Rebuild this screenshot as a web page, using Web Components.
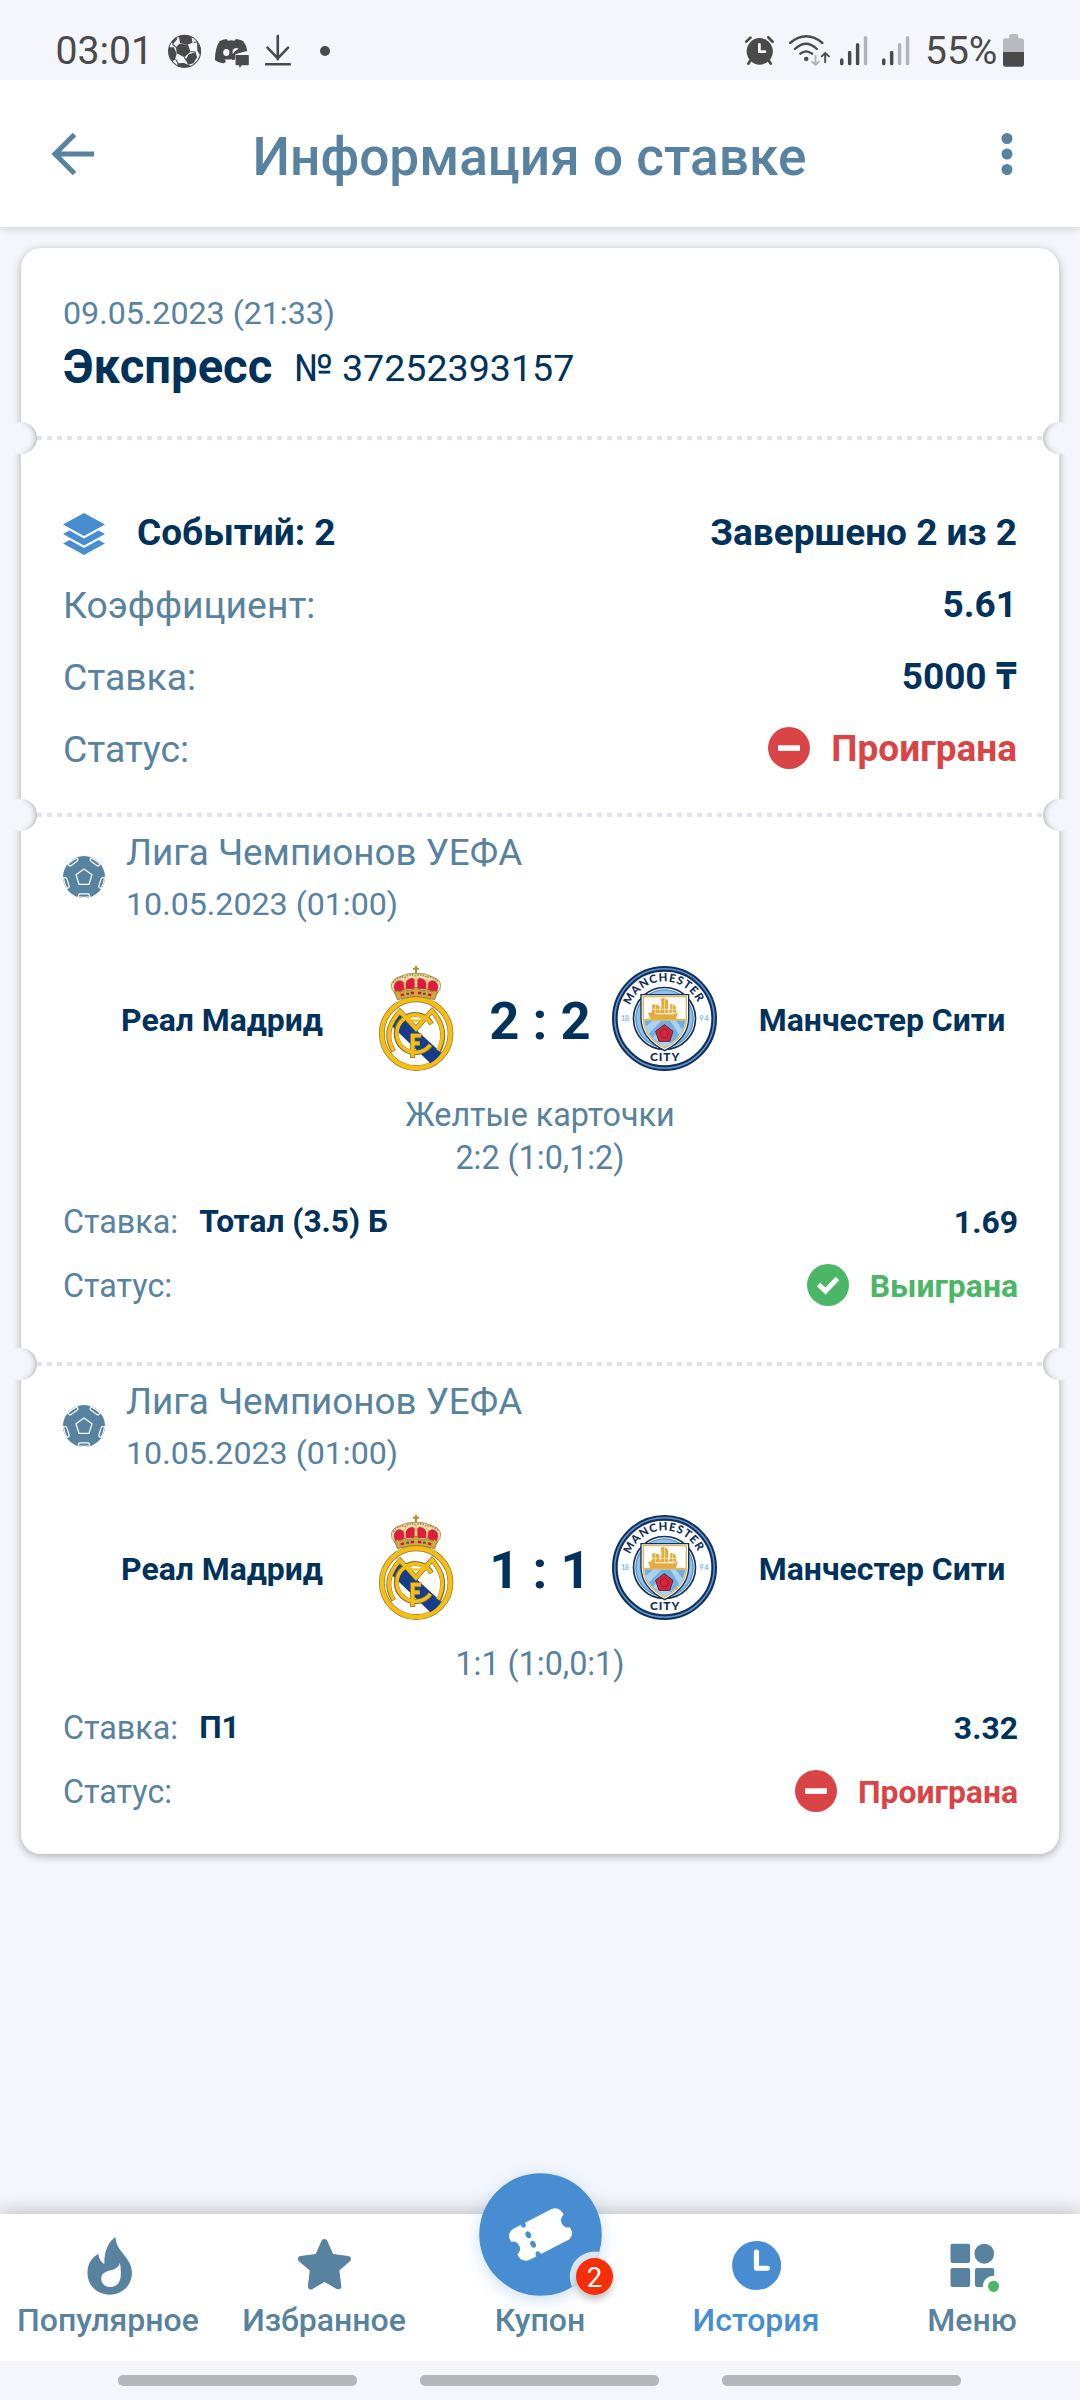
<!DOCTYPE html>
<html lang="ru">
<head>
<meta charset="utf-8">
<title>Информация о ставке</title>
<style>
  html, body { margin: 0; }
  body { width: 1080px; height: 2400px; overflow: hidden; background: #f4f6fb; font-family: Roboto, "Noto Sans", sans-serif;
    --slate: #5782a0; --navy: #00325b; --blue: #488dd2; --red: #d94546; --green: #4ab666; --bg: #f4f6fb; }
</style>
</head>
<body>
<bet-screen></bet-screen>

<script>
const ICONS = {
  /* status bar */
  ball: [33, 36, '487.8 102 95.8 108', `
    <ellipse cx="536" cy="154" rx="46.5" ry="48" fill="#f4f6fb" stroke="#4a4a4a" stroke-width="3"/>
    <g fill="#4a4a4a"><path d="M521 131L546 134L553 155L535 172L513 160L511 142Z"/>
    <path d="M519 109Q537 101 556 110L559 128L545 134L523 130Z"/>
    <path d="M490 142L505 142L513 161L508 179L500 184Q487 165 490 142Z"/>
    <path d="M548 163L568 157L572 172L562 190L546 194L539 179Z"/>
    <path d="M572 124L583 146L581 165L573 152Z"/>
    <path d="M516 190L534 189L554 197Q536 208 515 198Z"/>
    <path d="M497 126L511 112L515 117L503 132Z"/></g>
    <g stroke="#4a4a4a" stroke-width="3"><path d="M512 142L500 132M553 155L569 156M535 172L541 181M510 178L518 192M562 127L575 126"/></g>`],
  discord: [34, 36, '624.3 102 98.7 108', `
    <path fill="#4a4a4a" fill-rule="evenodd" d="M638 123Q648 118 658 117L662 122Q671 120 681 122L685 117Q697 118 706 123Q716 136 718 153L684 162L682 179L673 180L674 177Q664 180 652 178L656 184L651 190Q634 189 624 180Q624 145 638 123ZM657 147A9 10.500 0 1 0 657.100 168A9 10.500 0 0 0 657.100 147ZM676 149Q683 141 693 146Q683 151 675 162Z"/>
    <path fill="#4a4a4a" d="M687 165H720Q722.500 165 722.500 168V193Q722.500 196 720 196H702L696 204L694 196H687Q684 196 684 193V168Q684 165 687 165Z"/>`],
  download: [28, 36, '768 102 81.300 108', `
    <g fill="none" stroke="#4a4a4a" stroke-width="7.500" stroke-linecap="round"><path d="M808 108V178M778 143L808 175L838 143M774 193H843"/></g>`],
  alarm: [31, 36, '595.300 102 90 108', `
    <ellipse cx="641" cy="154" rx="38" ry="40" fill="#4a4a4a"/>
    <path d="M640 133V155H656" fill="none" stroke="#f4f6fb" stroke-width="8" stroke-linecap="round"/>
    <g fill="none" stroke="#4a4a4a" stroke-width="8" stroke-linecap="round"><path d="M602 125L614 113M666 112L678 125M613 183L608 191M668 183L673 191"/></g>`],
  wifi: [43, 36, '722 102 124.900 108', `
    <g fill="none" stroke="#4a4a4a" stroke-width="7" stroke-linecap="round"><path d="M728 129Q775 89 822 129M742 147Q774 115 806 147M758 161Q774 147 792 161"/></g>
    <ellipse cx="775" cy="177" rx="6.500" ry="6.500" fill="#4a4a4a"/>
    <g fill="none" stroke="#b2b4b8" stroke-width="5.500" stroke-linecap="round"><path d="M802 167V194M792 185L802 195L812 185"/></g>
    <g fill="none" stroke="#4a4a4a" stroke-width="5.500" stroke-linecap="round"><path d="M830 187V159M820 169L830 159L841 169"/></g>`],
  signal3: [30, 36, '869 102 87.100 108', `
    <g stroke="#4a4a4a" stroke-width="10" stroke-linecap="round"><path d="M877 180V191M900 157V191M923 134V191"/></g>
    <path stroke="#b2b4b8" stroke-width="10" stroke-linecap="round" d="M946 113V191"/>`],
  signal2: [30, 36, '991 102 87.100 108', `
    <g stroke="#4a4a4a" stroke-width="10" stroke-linecap="round"><path d="M999 180V191M1022 157V191"/></g>
    <path stroke="#b2b4b8" stroke-width="10" stroke-linecap="round" d="M1045 134V191M1068 113V191"/>`],
  battery: [21, 36, '1344 102 61 108', `
    <path fill="#b9babf" d="M1362 115V107Q1362 102 1367 102H1383Q1388 102 1388 107V115H1397Q1405 115 1405 123V158H1344V123Q1344 115 1352 115Z"/>
    <path fill="#4a4a4a" d="M1344 156H1405V192Q1405 200.500 1397 200.500H1352Q1344 200.500 1344 192Z"/>`],
  /* header */
  back: [42, 42, '0 0 42 42', `<path d="M22.500 1.500L3 21L22.500 40.500M3 21H42" fill="none" stroke="var(--slate)" stroke-width="5"/>`],
  more: [12, 44, '0 0 12 44', `<g fill="var(--slate)"><circle cx="6" cy="6.500" r="5.500"/><circle cx="6" cy="22" r="5.500"/><circle cx="6" cy="37.500" r="5.500"/></g>`],
  /* ticket */
  layers: [42, 42, '0 0 42 42', `<g fill="var(--blue)"><path d="M21 0L42 11.500L21 23L0 11.500Z"/><path d="M0 21L6.500 17.500L21 25.500L35.500 17.500L42 21L21 32.500Z"/><path d="M0 30.500L6.500 27L21 35L35.500 27L42 30.500L21 42Z"/></g>`],
  lost: [42, 42, '0 0 42 42', `<circle cx="21" cy="21" r="21" fill="var(--red)"/><rect x="10" y="18.300" width="22" height="5.600" fill="#fff"/>`],
  won: [42, 42, '0 0 42 42', `<circle cx="21" cy="21" r="21" fill="var(--green)"/><path d="M11.500 20.500L18.500 27L30.500 14.500" fill="none" stroke="#fff" stroke-width="5"/>`],
  football: [42, 42, '-21 -21 42 42', `<defs><clipPath id="c"><circle r="21"/></clipPath></defs><circle r="21" fill="var(--slate)"/>
    <g fill="none" stroke="#fff" stroke-width="1.200" stroke-linejoin="round" clip-path="url(#c)">
    <path d="M0 -8L8 -2.300L5 7.300H-5L-8 -2.300Z"/>
    ${[0, 72, 144, 216, 288].map(a => `<path transform="rotate(${a})" d="M-6 21L-5.200 17.600Q-4.900 16.900 -4 16.900H4Q4.900 16.900 5.200 17.600L6 21M-5.600 19.900Q0 20.800 5.600 19.900" />`).join('')}</g>`],
  /* bottom bar */
  fire: [60, 60, '226.500 258 174.200 180', `<path fill="var(--slate)" fill-rule="evenodd" d="M335 261C315 275 302 303 303 342C293 335 286 326 286 311C267 322 254 341 254 368C254 408 284 434 319 434C355 434 383 406 383 368C383 340 366 324 352 304C342 290 336 279 335 261ZM348 338C346 350 336 357 322 361C304 365 294 372 294 386C294 401 306 411 320 411C342 411 351 395 351 370Q351 350 348 338Z"/>`],
  star: [60, 60, '853.700 258 174.200 180', `<path fill="var(--slate)" stroke="var(--slate)" stroke-width="18" stroke-linejoin="round" d="M942 276L961 320L1010 327L976 358L982 409L942 385L903 409L909 358L874 327L923 320Z"/>`],
  clock: [60, 60, '540.100 258 174.200 180', `<ellipse cx="629" cy="346.500" rx="71.200" ry="73.500" fill="var(--blue)"/><path d="M628.500 306V355H660" fill="none" stroke="#fff" stroke-width="15" stroke-linecap="round" stroke-linejoin="round"/>`],
  menu: [60, 60, '1167.300 258 174.200 180', `<g fill="var(--slate)"><rect x="1192" y="281" width="57" height="58" rx="6"/><ellipse cx="1290" cy="311" rx="28.500" ry="30"/><rect x="1192" y="354" width="57" height="57" rx="6"/><rect x="1263" y="354" width="56" height="57" rx="6"/></g>
    <ellipse cx="1317" cy="409" rx="31" ry="32" fill="#fff"/><ellipse cx="1317" cy="409" rx="16" ry="17" fill="var(--green)"/>`],
  coupon: [123, 123, '-61.500 -61.500 123 123', `<defs><clipPath id="k"><circle r="61.300"/></clipPath></defs>
    <circle r="61.300" fill="var(--blue)"/><circle cx="54.300" cy="42" r="25" fill="#d9e6f5" clip-path="url(#k)"/>
    <g transform="rotate(-27)"><path fill="#fff" d="M-21 -17.500H21A8 8 0 0 1 29.500 -9V-7A7.200 7.200 0 0 0 29.500 7V9A8 8 0 0 1 21 17.500H-21A8 8 0 0 1 -29.500 9V7A7.200 7.200 0 0 0 -29.500 -7V-9A8 8 0 0 1 -21 -17.500Z"/>
    <g fill="var(--blue)"><ellipse cx="-11" cy="-17.500" rx="2.600" ry="4"/><ellipse cx="-11" cy="-5.300" rx="2.600" ry="3.600"/><ellipse cx="-11" cy="5.300" rx="2.600" ry="3.600"/><ellipse cx="-11" cy="17.500" rx="2.600" ry="4"/></g></g>`],
  /* crests */
  real: [105, 105, '9 48 315 315', `
    <path d="M168 48V72M159 56H177" stroke="#b8902a" stroke-width="6"/>
    <path d="M112 141L96 118Q88 90 116 82Q140 68 168 70Q196 68 220 82Q248 90 240 118L224 141Q168 126 112 141Z" fill="#f1dfae" stroke="#a38640" stroke-width="2.500"/>
    <path d="M104 124Q96 96 118 91Q136 92 135 116L112 130ZM232 124Q240 96 218 91Q200 92 201 116L224 130ZM138 118Q131 86 158 84L164 88V116ZM198 118Q205 86 178 84L172 88V116Z" fill="#dc1e3c"/>
    <path d="M100 98Q116 76 136 82Q150 70 166 77Q186 70 200 82Q220 76 236 98" fill="none" stroke="#9c7d36" stroke-width="5" stroke-dasharray="4 4"/>
    <path d="M168 76V114M137 86Q130 100 136 118M199 86Q206 100 200 118" fill="none" stroke="#e9c765" stroke-width="4"/>
    <path d="M104 126Q112 118 122 126L135 118Q140 124 150 122L168 112L186 122Q196 124 201 118L214 126Q224 118 232 126L224 149Q168 131 112 149Z" fill="#d3a73f" stroke="#8f7130" stroke-width="2.500"/>
    <path d="M122 136L132 133M152 129H162M174 129H184M204 133L214 136" stroke="#c01f33" stroke-width="7"/>
    <path d="M139 131H147M189 131H197" stroke="#345d5c" stroke-width="6"/>
    <circle cx="168.500" cy="251" r="103" fill="#fff" stroke="#8a7536" stroke-width="17.500"/>
    <circle cx="168.500" cy="251" r="103" fill="none" stroke="#f6bd12" stroke-width="13.500"/>
    <path d="M93 226Q99 206 114 190L244 308Q231 328 211 340Z" fill="#163c8c"/>
    <g fill="none" stroke="#806e3c" stroke-width="15"><path d="M101 304Q64 244 120 184L168 236L216 182Q268 240 236 303"/><path d="M215 222A57 57 0 1 0 212 284"/><path d="M158 324V257H184M158 280H180"/></g>
    <g fill="none" stroke="#f6bd12" stroke-width="11"><path d="M101 302Q65 244 120 184L168 236L216 182Q267 240 234 301"/><path d="M214 221A56 56 0 1 0 211 285"/><path d="M158 322V257H183M158 280H179"/><path d="M136 202L157 212H180L202 202" stroke-width="7"/></g>`],
  city: [105, 105, '756 48 315 315', `
    <circle cx="913.500" cy="205.500" r="149" fill="#fff" stroke="#132f5b" stroke-width="17"/>
    <circle cx="913.500" cy="205.500" r="149" fill="none" stroke="#5a97d2" stroke-width="4.500"/>
    <circle cx="913.500" cy="205.500" r="93" fill="#fff" stroke="#132f5b" stroke-width="5"/>
    <circle cx="913.500" cy="205.500" r="86" fill="#8fc2ea" stroke="#5c93c4" stroke-width="4"/>
    <path d="M843 134H986V205Q985 267 914 302Q844 267 843 205Z" fill="#fff" stroke="#132f5b" stroke-width="4"/>
    <path d="M850 140H979V205Q978 262 914 294Q851 262 850 205Z" fill="#fff" stroke="#e2b54d" stroke-width="4"/>
    <path d="M853 211H976Q971 262 914 291Q857 262 853 211Z" fill="#72afe0"/>
    <path d="M857 230L880 211H905L866 252ZM930 211L960 259L970 243L947 211ZM914 291L878 263L891 250L935 281Z" fill="#add2ef"/>
    <path d="M852 209H977" stroke="#e2b54d" stroke-width="5"/>
    <g fill="#e5ab3e"><path d="M864 188H882L888 193H942L954 186L948 207H871Z"/><path d="M875 164Q888 160 899 168V190H872Q880 178 875 164ZM902 146Q914 140 925 153L924 190H899Q908 166 902 146ZM930 162Q942 160 948 170V188H925Q934 175 930 162Z"/></g>
    <path d="M886 154V192M914 141V192M938 154V190M868 178H950" stroke="#fff1cd" stroke-width="2"/>
    <g fill="#d7263c" stroke="#5e2038" stroke-width="3"><path d="M913 224L939 244L929 274H897L887 244Z"/><path d="M913 236L926 247L921 263H905L900 247Z" stroke-width="2"/></g>
    <defs><path id="a" d="M810.200 166.500A110 110 0 0 1 1016.800 166.500"/></defs>
    <g font-family="Lato, 'Open Sans', sans-serif" font-weight="900" fill="#132f5b">
    <text font-size="34" textLength="262" lengthAdjust="spacing"><textPath href="#a" textLength="258" startOffset="0">MANCHESTER</textPath></text>
    <text x="870" y="334" font-size="36" textLength="88">CITY</text></g>
    <g font-family="Lato, 'Open Sans', sans-serif" font-weight="900" fill="#8fbfe6" font-size="22"><text x="783" y="213" textLength="24">18</text><text x="1018" y="213" textLength="28">94</text></g>`]
};

const define = (name, css, html) => customElements.define(name, class extends HTMLElement {
  connectedCallback() {
    const root = this.attachShadow({ mode: 'open' });
    const tpl = document.createElement('template');
    tpl.innerHTML = `<style>:host{display:block;box-sizing:border-box}*{box-sizing:border-box}${css}</style>` + (typeof html === 'function' ? html(this) : html);
    root.append(tpl.content.cloneNode(true));
  }
});

define('app-icon', ':host{display:block;flex:none}svg{display:block;overflow:visible}', el => {
  const [w, h, vb, body] = ICONS[el.getAttribute('name')];
  return `<svg width="${w}" height="${h}" viewBox="${vb}" preserveAspectRatio="none" aria-hidden="true">${body}</svg>`;
});

define('status-bar', `
  :host{display:flex;justify-content:space-between;height:80px;padding:0 56px 0 55.500px;color:#4a4a4a}
  div{display:flex;align-items:flex-start}
  app-icon{margin-top:34px}
  span{line-height:46px;margin-top:27.500px;font-size:39.200px;white-space:nowrap}
  .dot{width:10px;height:10px;border-radius:50%;background:#4a4a4a;margin:46px 0 0 28px}`,
  `<div><span style="width:97.5px">03:01</span><app-icon name="ball" style="margin-left:15px"></app-icon><app-icon name="discord" style="margin-left:14px"></app-icon><app-icon name="download" style="margin-left:15px"></app-icon><i class="dot"></i></div>
   <div><app-icon name="alarm"></app-icon><app-icon name="wifi" style="margin-left:13px"></app-icon><app-icon name="signal3" style="margin-left:8px"></app-icon><app-icon name="signal2" style="margin-left:12px"></app-icon><span style="margin-left:14px;width:78px;font-size:39px">55%</span><app-icon name="battery"></app-icon></div>`);

define('app-header', `
  :host{display:flex;align-items:center;height:147px;padding:0 67px 0 52px;background:#fff;box-shadow:0 1px 9px rgba(40,40,60,.22);clip-path:inset(0 0 -24px 0)}
  h1{flex:1;margin:0;padding:7px 36px 0 0;text-align:center;font-size:53.200px;font-weight:500;color:var(--slate);line-height:64px}`,
  `<app-icon name="back"></app-icon><h1><slot></slot></h1><app-icon name="more"></app-icon>`);

define('ticket-section', `
  :host{position:relative}
  :host([cut])::before{content:"";position:absolute;left:16px;right:16px;top:-2px;height:4px;background:repeating-linear-gradient(90deg,#dfe3ee 0 5px,transparent 5px 10px)}
  i{display:none}
  :host([cut]) i{display:block;position:absolute;top:-16px;width:32px;height:32px;border-radius:50%}
  .l{left:-16px;background:linear-gradient(90deg,var(--bg) 45%,transparent 90%),radial-gradient(closest-side,var(--bg) 55%,#e4e5e9 80%,#c4c5c9 100%)}
  .r{right:-16px;background:linear-gradient(270deg,var(--bg) 45%,transparent 90%),radial-gradient(closest-side,var(--bg) 55%,#e4e5e9 80%,#c4c5c9 100%)}`,
  `<slot></slot><i class="l"></i><i class="r"></i>`);

define('ticket-head', `
  :host{height:190px;padding:44.500px 42px 0}
  .d{font-size:32.200px;line-height:40px;color:var(--slate)}
  .t{display:flex;align-items:flex-start;margin-top:6px;line-height:56px;color:var(--navy);font-size:37.600px}
  .t span{margin-top:1.500px}
  b{font-size:47.200px;width:231px}`,
  el => `<div class="d">${el.getAttribute('date')}</div><div class="t"><b>${el.getAttribute('kind')}</b><span>${el.getAttribute('number')}</span></div>`);

define('info-row', `
  :host{display:flex;align-items:center;justify-content:space-between;height:72px;padding:0 42px;font-size:37.300px;line-height:44px;color:var(--slate);white-space:nowrap}
  :host([small]){height:64px;font-size:32.300px}
  .k,.v{display:flex;align-items:center}
  .v{font-weight:700;color:var(--navy);font-size:37px}
  :host([small]) .v{font-size:31.900px;margin-right:-1px}
  .v span{display:block;height:44px}
  :host([result=lost]) .v{color:var(--red)}
  :host([result=won]) .v{color:var(--green)}
  .v app-icon{margin:-2px 21px 0 0}
  .k b{color:var(--navy);font-size:31.700px;margin-left:21px}`,
  el => { const r = el.getAttribute('result'), p = el.getAttribute('pick');
    return `<div class="k"><slot></slot>${p ? `<b>${p}</b>` : ''}</div><div class="v">${r ? `<app-icon name="${r}"></app-icon>` : ''}<span>${el.getAttribute('value')}</span></div>`; });

define('ticket-summary', `
  :host{height:377px;padding-top:59px}
  app-icon{margin-top:2px}
  b{color:var(--navy);font-size:37px;margin-left:32px}`,
  `<info-row value="Завершено 2 из 2"><app-icon name="layers"></app-icon><b>Событий: 2</b></info-row>
   <info-row value="5.61">Коэффициент:</info-row>
   <info-row value="5000 ₸">Ставка:</info-row>
   <info-row value="Проиграна" result="lost">Статус:</info-row>`);

define('match-event', `
  :host{padding-top:13px}
  .h{display:flex;align-items:center;gap:21px;padding-left:42px;color:var(--slate)}
  .lg{font-size:36.800px;line-height:50px}
  .dt{font-size:32.200px;line-height:42px;margin-top:5px}
  .m{display:grid;grid-template-columns:342px 105px 144px 105px 342px;align-items:center;text-align:center;margin-top:41px;color:var(--navy);font-weight:700;font-size:31.950px}
  .m span{padding-top:3px}
  .m .a{padding-left:60px}
  .m .b{padding-right:12px}
  .m .s{font-size:52.600px;padding-top:5px;line-height:62px}
  .sub{margin-top:22.500px;margin-bottom:10.500px;text-align:center;color:var(--slate);font-size:32.300px;line-height:43px}`,
  el => { const g = n => el.getAttribute(n);
    return `<div class="h"><app-icon name="football"></app-icon><div><div class="lg">Лига Чемпионов УЕФА</div><div class="dt">10.05.2023 (01:00)</div></div></div>
    <div class="m"><span class="a">Реал Мадрид</span><app-icon name="real"></app-icon><span class="s">${g('score')}</span><app-icon name="city"></app-icon><span class="b">Манчестер Сити</span></div>
    <div class="sub">${g('detail').split('|').map(t => `<div>${t}</div>`).join('')}</div>
    <info-row small pick="${g('pick')}" value="${g('odds')}">Ставка:</info-row>
    <info-row small result="${g('result')}" value="${g('status')}">Статус:</info-row>`; });

define('bet-ticket', `:host{height:1606px;margin:21px 21px 0;background:#fff;border-radius:20px;box-shadow:0 2px 8px rgba(0,0,0,.3)}`, `
  <ticket-section><ticket-head date="09.05.2023 (21:33)" kind="Экспресс" number="№ 37252393157"></ticket-head></ticket-section>
  <ticket-section cut><ticket-summary></ticket-summary></ticket-section>
  <ticket-section cut><match-event style="height:549px" score="2 : 2" detail="Желтые карточки|2:2 (1:0,1:2)" pick="Тотал (3.5) Б" odds="1.69" result="won" status="Выиграна"></match-event></ticket-section>
  <ticket-section cut><match-event score="1 : 1" detail="1:1 (1:0,0:1)" pick="П1" odds="3.32" result="lost" status="Проиграна"></match-event></ticket-section>`);

define('nav-item', `
  :host{display:flex;flex-direction:column;align-items:center;flex:1;padding-top:22px;color:var(--slate);font-size:32px;font-weight:500;position:relative}
  :host([active]){color:var(--blue)}
  .i{height:60px}
  .t{line-height:40px;margin-top:4px;white-space:nowrap}
  .c{position:absolute;left:47px;top:-41.500px;border-radius:50%;box-shadow:0 4px 16px rgba(72,141,210,.28)}
  .n{position:absolute;left:97px;top:85px;width:37px;height:37px;border-radius:50%;background:#f62f09;color:#fff;font-size:27.500px;font-weight:400;line-height:39px;text-align:center;box-shadow:0 5px 7px rgba(0,0,0,.22)}`,
  el => { const n = el.getAttribute('badge'), i = el.getAttribute('icon');
    return `<div class="i">${n ? `<div class="c"><app-icon name="${i}"></app-icon><span class="n">${n}</span></div>` : `<app-icon name="${i}"></app-icon>`}</div><div class="t"><slot></slot></div>`; });

define('bottom-nav', `:host{display:flex;height:147px;background:#fff;box-shadow:0 -1px 20px rgba(0,0,0,.26);clip-path:inset(-60px 0 0 0)}`, `
  <nav-item icon="fire">Популярное</nav-item><nav-item icon="star">Избранное</nav-item><nav-item icon="coupon" badge="2">Купон</nav-item><nav-item icon="clock" active>История</nav-item><nav-item icon="menu">Меню</nav-item>`);

define('gesture-bar', `
  :host{display:flex;justify-content:center;gap:63px;height:39px;padding:14px 1px 0 0}
  i{width:239px;height:11px;border-radius:5px;background:#b6b7bb}`, `<i></i><i></i><i></i>`);

define('bet-screen', `
  :host{display:flex;flex-direction:column;width:1080px;height:2400px;background:var(--bg)}
  main{flex:1}`, `
  <status-bar></status-bar>
  <app-header>Информация о ставке</app-header>
  <main><bet-ticket></bet-ticket></main>
  <bottom-nav></bottom-nav>
  <gesture-bar></gesture-bar>`);
</script>
</body>
</html>
